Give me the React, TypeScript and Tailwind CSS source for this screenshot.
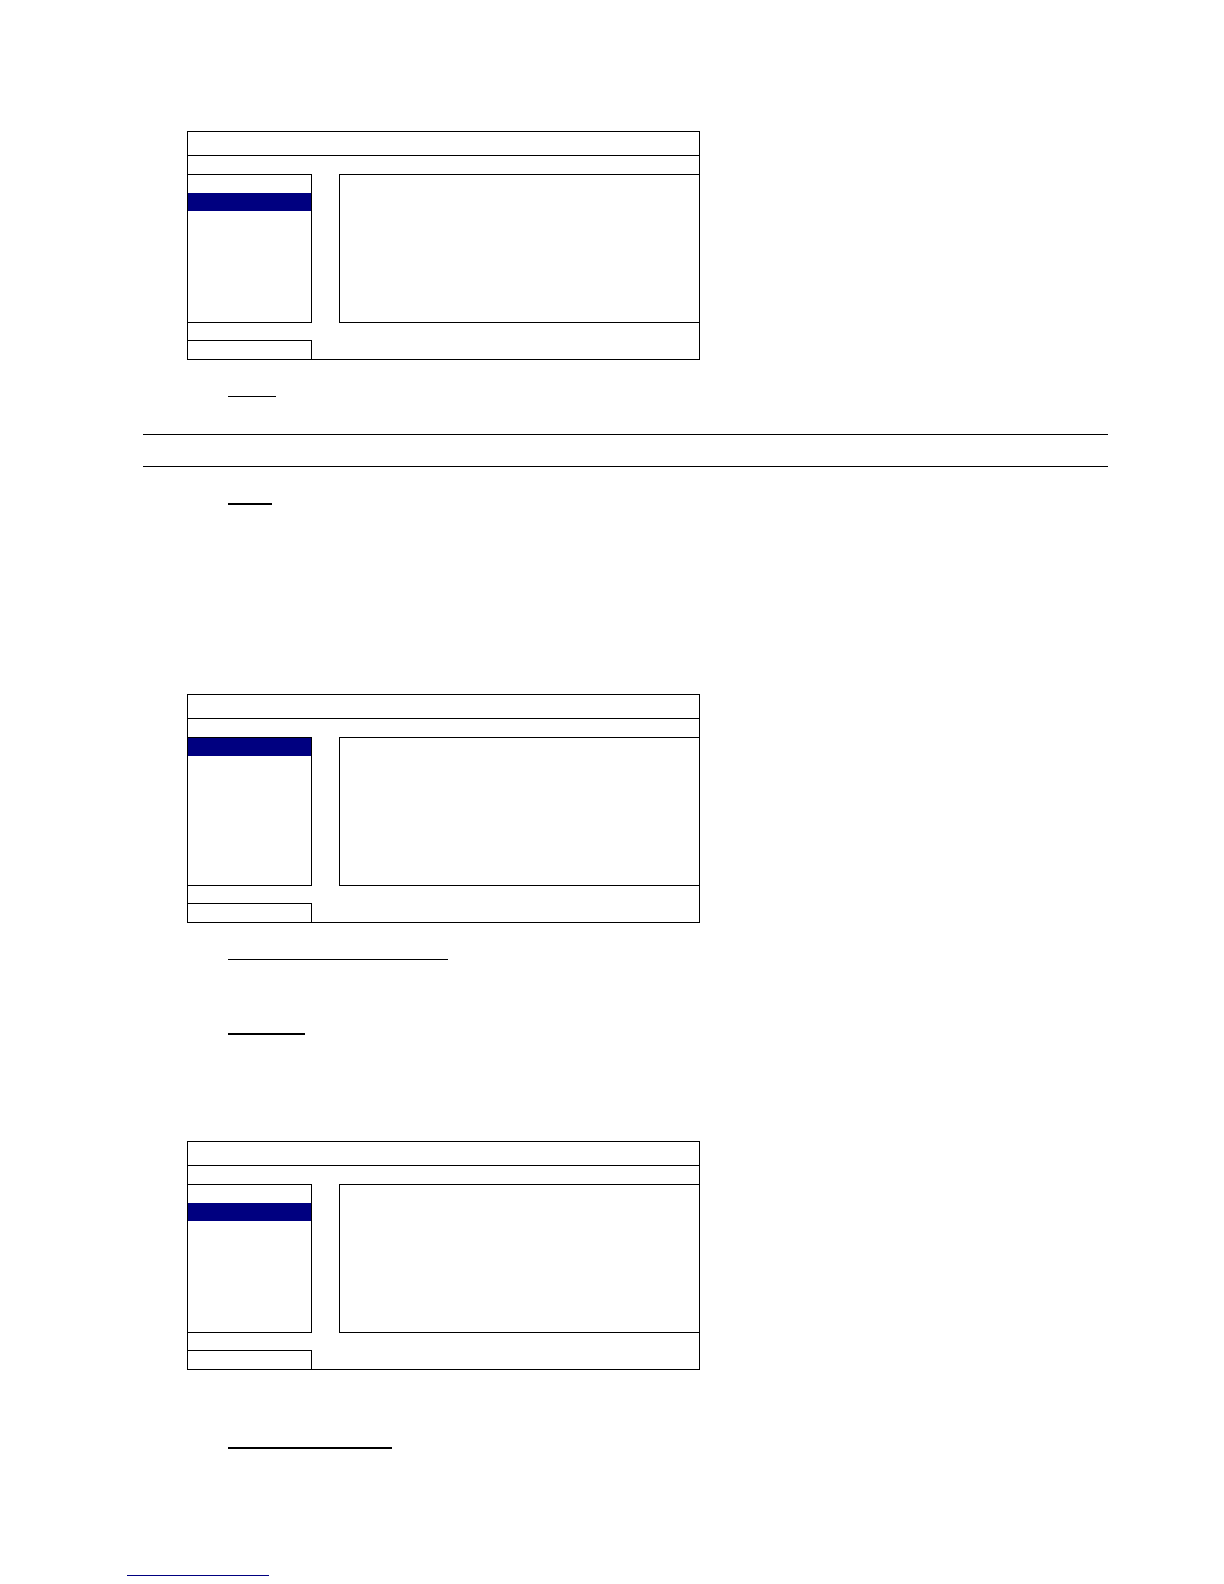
import React from 'react';

interface WindowProps {
  selected: number;
}

// on-screen menu mockup: title bar, tab bar, list + detail panes, footer
function MenuWindow({ selected }: WindowProps) {
  const rows = [0, 1, 2, 3, 4, 5, 6, 7];
  return (
    <div className="flex h-[229px] w-[513px] flex-col border border-black bg-white">
      <div className="h-[24px] border-b border-black" />
      <div className="h-[18px]" />
      <div className="flex h-[149px]">
        <div className="flex w-[124px] flex-col overflow-hidden border-y border-r border-black">
          {rows.map((r) => (
            <div key={r} className={`h-[18px] shrink-0 ${r === selected ? 'bg-[#000080]' : ''}`} />
          ))}
        </div>
        <div className="w-[27px]" />
        <div className="w-[360px] border-y border-l border-black" />
      </div>
      <div className="h-[17px]" />
      <div className="flex h-[19px]">
        <div className="w-[124px] border-t border-r border-black" />
      </div>
    </div>
  );
}

interface LineProps {
  className: string;
}

function Line({ className }: LineProps) {
  return <div className={`shrink-0 ${className}`} />;
}

export default function App() {
  return (
    <div className="min-h-[1584px] w-[1224px] bg-white font-['Liberation_Sans',sans-serif]">
      <div className="flex flex-col pt-[131px]">
        <div className="ml-[187px]">
          <MenuWindow selected={1} />
        </div>
        <Line className="ml-[228px] mt-[36px] h-px w-[48px] bg-black" />

        <Line className="ml-[143px] mt-[37px] h-px w-[965px] bg-black" />
        <Line className="ml-[143px] mt-[31px] h-px w-[965px] bg-black" />

        <Line className="ml-[228px] mt-[36px] h-[2px] w-[44px] bg-black" />

        <div className="ml-[187px] mt-[189px]">
          <MenuWindow selected={0} />
        </div>
        <Line className="ml-[228px] mt-[36px] h-px w-[220px] bg-black" />
        <Line className="ml-[228px] mt-[73px] h-[2px] w-[77px] bg-black" />

        <div className="ml-[187px] mt-[106px]">
          <MenuWindow selected={1} />
        </div>
        <Line className="ml-[228px] mt-[77px] h-[2px] w-[164px] bg-black" />

        <Line className="ml-[127px] mt-[126px] h-px w-[142px] bg-[#000080]" />
      </div>
    </div>
  );
}
